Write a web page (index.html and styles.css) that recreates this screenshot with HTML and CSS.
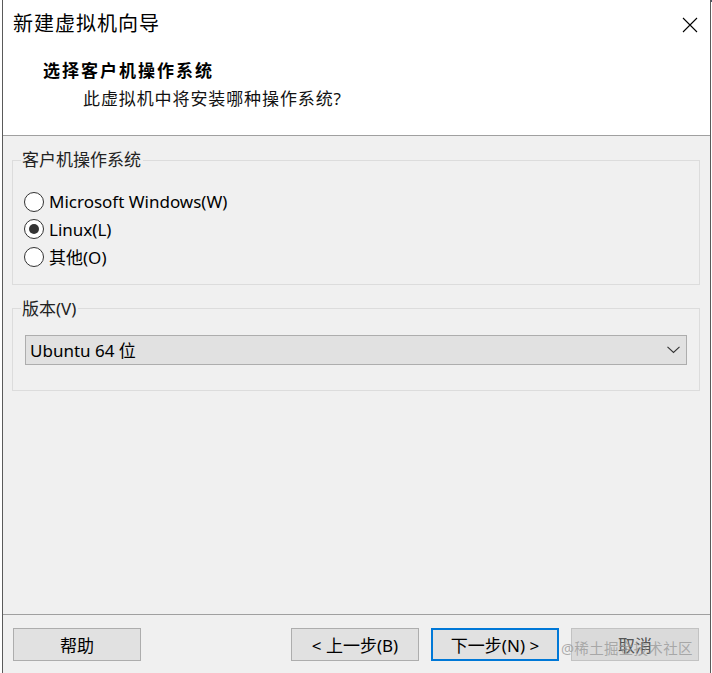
FILE: index.html
```html
<!DOCTYPE html>
<html lang="zh-CN">
<head>
  <meta charset="UTF-8" />
  <title>新建虚拟机向导</title>
  <link rel="stylesheet" href="styles.css">
</head>
<body>
  <div class="window">
    <div class="header">
      <div class="title-row">
        <span class="title">新建虚拟机向导</span>
        <svg class="close" width="16" height="16" viewBox="0 0 16 16">
          <path d="M1 1 L15 15 M15 1 L1 15" stroke="#000" stroke-width="1.1" fill="none" />
        </svg>
      </div>
      <div class="step-title">选择客户机操作系统</div>
      <div class="step-desc">此虚拟机中将安装哪种操作系统?</div>
    </div>

    <div class="content">
      <fieldset class="group group-os">
        <legend>客户机操作系统</legend>
        <label class="radio-row"><span class="radio"></span>Microsoft Windows(W)</label>
        <label class="radio-row"><span class="radio checked"></span>Linux(L)</label>
        <label class="radio-row"><span class="radio"></span>其他(O)</label>
      </fieldset>

      <fieldset class="group group-version">
        <legend>版本(V)</legend>
        <div class="select">
          <span>Ubuntu 64 位</span>
          <svg width="13" height="8" viewBox="0 0 13 8">
            <path d="M0.5 0.8 L6.5 6.5 L12.5 0.8" stroke="#333" stroke-width="1.1" fill="none" />
          </svg>
        </div>
      </fieldset>
    </div>

    <div class="footer">
      <button type="button" class="btn">帮助</button>
      <div class="nav-buttons">
        <button type="button" class="btn">&lt; 上一步(B)</button>
        <button type="button" class="btn default">下一步(N) &gt;</button>
        <button type="button" class="btn disabled">取消</button>
      </div>
      <span class="watermark">@稀土掘金技术社区</span>
    </div>
  </div>
</body>
</html>
```

FILE: styles.css
```css
body {
  margin: 0;
  font-family: "Noto Sans", "Noto Sans CJK SC", sans-serif;
  color: #000;
  background: linear-gradient(to right, #fff 0, #fff 284px, #4d5664 284px) top / 100% 2px no-repeat, #fff;
}
.window {
  margin-left: 2px;
  width: 709px;
  height: 673px;
  box-sizing: border-box;
  border-left: 1px solid #5a5a5a;
  border-right: 1px solid #5a5a5a;
  display: flex;
  flex-direction: column;
  background: #f0f0f0;
}

/* white banner on top */
.header {
  height: 136px;
  box-sizing: border-box;
  background: #fff;
  border-top: 2px solid transparent;
  border-bottom: 1px solid #a0a0a0;
}
.title-row {
  display: flex;
  justify-content: space-between;
  align-items: center;
  padding: 9px 12px 0 10px;
}
.title {
  font-size: 20px;
  line-height: 26px;
  letter-spacing: 1px;
}
.close {
  margin-top: 1px;
}
.step-title {
  margin: 23px 0 0 40px;
  font-size: 17px;
  line-height: 22px;
  font-weight: bold;
  letter-spacing: 2px;
}
.step-desc {
  margin: 6px 0 0 80px;
  font-size: 17px;
  line-height: 22px;
  letter-spacing: 0.9px;
  color: #111;
}

/* group boxes */
.content {
  flex: 1;
  padding: 13px 10px 0 9px;
}
.group {
  margin: 0;
  padding: 0 12px;
  border: 1px solid #dcdcdc;
  min-width: 0;
}
.group legend {
  margin-left: -4px;
  padding: 0 2px 0 1px;
  font-size: 17px;
  line-height: 22px;
  color: #222;
}
.group-os {
  padding-top: 17px;
  padding-bottom: 13px;
}
.group-version {
  margin-top: 13px;
  padding-top: 15px;
  padding-bottom: 25px;
}
.radio-row {
  display: flex;
  align-items: center;
  height: 27.5px;
  font-size: 17px;
  margin-left: -1px;
}
.radio {
  width: 20px;
  height: 20px;
  box-sizing: border-box;
  border: 1px solid #333;
  border-radius: 50%;
  background: #fff;
  margin-right: 5px;
  display: flex;
  align-items: center;
  justify-content: center;
}
.radio.checked::after {
  content: "";
  width: 10px;
  height: 10px;
  border-radius: 50%;
  background: #333;
}
.select {
  height: 30px;
  box-sizing: border-box;
  border: 1px solid #adadad;
  background: #e1e1e1;
  display: flex;
  align-items: center;
  justify-content: space-between;
  padding: 0 6px 0 4px;
  font-size: 17px;
}

/* button bar */
.footer {
  position: relative;
  height: 59px;
  box-sizing: border-box;
  border-top: 1px solid #a0a0a0;
  padding: 13px 11px 0 10px;
  display: flex;
  justify-content: space-between;
  align-items: flex-start;
}
.nav-buttons {
  display: flex;
  gap: 12px;
}
.btn {
  width: 128px;
  height: 33px;
  box-sizing: border-box;
  border: 1px solid #adadad;
  background: #e1e1e1;
  font-family: inherit;
  font-size: 17px;
  color: #000;
  padding: 0;
}
.btn.default {
  border: 2px solid #0078d7;
}
.btn.disabled {
  background: #dadada;
  border-color: #c2c2c2;
  color: #555;
}
.watermark {
  position: absolute;
  left: 558px;
  top: 22px;
  font-size: 14.5px;
  letter-spacing: 0.3px;
  color: rgba(150, 150, 150, 0.75);
}
```
